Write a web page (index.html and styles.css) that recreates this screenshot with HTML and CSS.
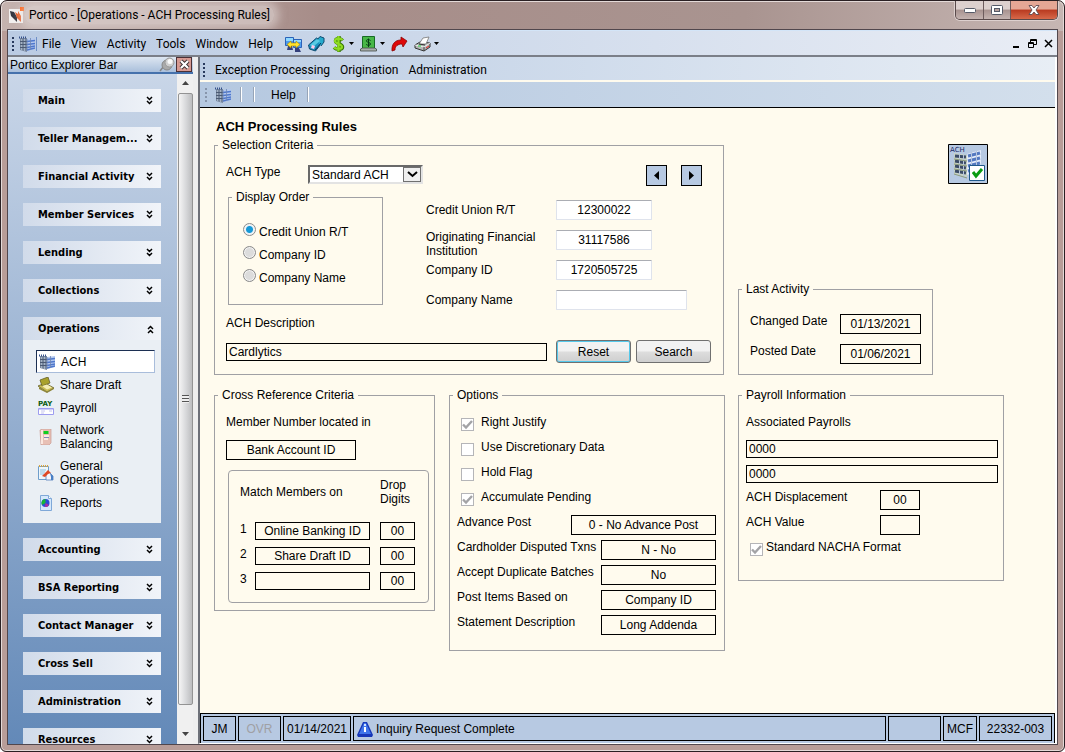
FILE: index.html
```html
<!DOCTYPE html>
<html lang="en">
<head>
<meta charset="utf-8">
<title>Portico - [Operations - ACH Processing Rules]</title>
<link rel="stylesheet" href="styles.css">
</head>
<body>
<svg class="defs" aria-hidden="true">
  <symbol id="building" viewBox="0 0 16 16">
    <path d="M1 2h7v14l-7-2z" fill="#76869c"/>
    <path d="M8 3l8-1v11l-8 2z" fill="#b4c8ee"/>
    <path d="M2.500 3v11M5.500 3v12" stroke="#a4b2c4"/>
    <path d="M1 5.500h7M1 8.500h7M1 11.500h7" stroke="#4b5a73"/>
    <path d="M8 5.500l8-1M8 8.500l8-1M8 11.500l8-1.500M8 14l8-2" stroke="#4f78cc" stroke-width="1.300"/>
    <path d="M11.500 2v12M8 3v12" stroke="#6e86b4" stroke-width=".8"/>
    <path d="M0 1.500h7" stroke="#34508c" stroke-width="2" stroke-dasharray="1 1"/>
  </symbol>
  <symbol id="down" viewBox="0 0 8 10">
    <path d="M1 1l2.500 2.500L6 1M1 5l2.500 2.500L6 5" fill="none" stroke="#000" stroke-width="1.500"/>
  </symbol>
  <symbol id="caret" viewBox="0 0 5 3"><path d="M0 0h5L2.500 3z"/></symbol>
</svg>

<div class="window">
  <header class="titlebar">
    <svg class="app-icon" viewBox="0 0 16 16"><path d="M0 2h14v14H0z" fill="#f2f0ef"/><path d="M1 4l4 1 3 5v5l-4-4-2-2z" fill="#34353f"/><path d="M6 5l3 2V4l3 5v6l-4-4z" fill="#e85a22"/><path d="M11 0h4v4h-4z" fill="#ff5a0a"/></svg>
    <h1 class="window-title">Portico - [Operations - ACH Processing Rules]</h1>
    <div class="window-controls">
      <button class="wc" aria-label="Minimize"><svg width="14" height="8" viewBox="0 0 14 8"><rect x="1.500" y="2.500" width="11" height="4" rx="1" fill="#fff" stroke="#555a68"/></svg></button>
      <button class="wc wc-max" aria-label="Maximize"><svg width="12" height="10" viewBox="0 0 12 10"><rect x=".5" y=".5" width="11" height="9" rx="1" fill="#fff" stroke="#555a68"/><rect x="3.500" y="3.500" width="5" height="3" fill="#b8a29e" stroke="#555a68"/></svg></button>
      <button class="wc wc-close" aria-label="Close"><svg width="12" height="10" viewBox="0 0 12 10"><path d="M1 .5h3l2 2.500 2-2.500h3L8 5l3 4.500H8L6 7 4 9.500H1L4 5z" fill="#fff" stroke="#5d4a50" stroke-width=".9"/></svg></button>
    </div>
  </header>

  <div class="client">
    <nav class="menubar">
      <span class="grip"></span>
      <svg class="icon16"><use href="#building"/></svg>
      <span class="thin-sep"></span>
      <button class="menu">File</button><button class="menu">View</button><button class="menu">Activity</button><button class="menu">Tools</button><button class="menu">Window</button><button class="menu">Help</button>
      <div class="tools">
        <button class="tool" aria-label="Network"><svg width="17" height="16" viewBox="0 0 17 16"><path d="M.5 1.500h8v8h-8zM8.500 3.500h8v8h-8z" fill="#4d9bf0" stroke="#2b63b8"/><path d="M1 2h7v3H1zM9 4h7v2H9z" fill="#8fd8ff"/><path d="M3 10h4l1 4H2zM10 12h4l2 4h-6z" fill="#34407c"/><path d="M2 8.500L6 5v2h5V5l4 3.500-4 3.500v-2H6v2z" fill="#ffe32e" stroke="#a98300" stroke-width=".6"/></svg></button>
        <button class="tool" aria-label="Tag"><svg width="17" height="16" viewBox="0 0 17 16"><path d="M.5 9l8-7 6 4-7 9-6-2z" fill="#1a92be" stroke="#104b70"/><path d="M9 4l3-3.500 4 1.500v4l-3 4" fill="#26aacd" stroke="#104b70"/><path d="M2 9l7-6 3 2-7 6z" fill="#58cae2"/><path d="M4 9l3 1-1 3-3-1z" fill="#ffc9e8"/><path d="M7 14l6-7" stroke="#083c62"/></svg></button>
        <button class="tool" aria-label="Currency"><svg width="15" height="16" viewBox="0 0 15 16"><path d="M11.500 4.500C10 2 4.500 2 4.500 5c0 3 7 2.500 7 6 0 3-6 3-8.500.5M8 0v16" fill="none" stroke="#397a05" stroke-width="3.500"/><path d="M11.500 4.200C10 2 4 2 4 5c0 3 7 2.500 7 6 0 2.500-6 2.500-8 .5M7.500 0v15.500" fill="none" stroke="#8fdc22" stroke-width="2.200"/></svg><svg class="caret"><use href="#caret"/></svg></button>
        <button class="tool" aria-label="Cash"><svg width="17" height="16" viewBox="0 0 17 16"><path d="M2.500.5h12v12h-12z" fill="#48b747" stroke="#176b24"/><path d="M.5 13l2-1h12l2 1v2H.5z" fill="#a7adab" stroke="#444c48" stroke-width=".8"/><path d="M10.500 4.500c-2-1.500-4.500-1-4 .7.500 1.600 4 1 4 2.800 0 1.700-3 1.700-4.300.4M8.500 2.500v8.500" fill="none" stroke="#073e16"/></svg><svg class="caret"><use href="#caret"/></svg></button>
        <button class="tool" aria-label="Forward"><svg width="17" height="16" viewBox="0 0 17 16"><path d="M1 15C.5 8 4 4 10 4V1l6 4-4 6-1-3C7 8 4 10 4 14z" fill="#de0808" stroke="#8e0202" stroke-width=".8"/></svg></button>
        <button class="tool" aria-label="Print"><svg width="17" height="16" viewBox="0 0 17 16"><path d="M1 9l5-3 10 1v4l-6 4-9-3z" fill="#b4b6b5" stroke="#333"/><path d="M5 8l4-6 6-1-3 7z" fill="#fff" stroke="#777" stroke-width=".8"/><path d="M1 9l9 2 6-4" fill="none" stroke="#eee"/><path d="M10 11v4" stroke="#444"/><path d="M5 8l6 1" stroke="#333"/><path d="M4 10h3" stroke="#22d63d"/><path d="M12 12l3-2" stroke="#e22"/></svg><svg class="caret"><use href="#caret"/></svg></button>
      </div>
      <div class="mdi-controls">
        <button aria-label="Minimize document"><svg width="9" height="9"><path d="M1 7h6v2H1z"/></svg></button>
        <button aria-label="Restore document"><svg width="9" height="9"><path d="M2.500 3V.5h6v5H6M2 1.500h6M.5 3.500h5v5h-5zM0 4.500h6" fill="none" stroke="#000"/></svg></button>
        <button aria-label="Close document"><svg width="9" height="9"><path d="M1 1l7 7M8 1L1 8" stroke="#000" stroke-width="1.500"/></svg></button>
      </div>
    </nav>

    <div class="workspace">
      <aside class="explorer">
        <div class="explorer-title"><h2>Portico Explorer Bar</h2>
          <svg width="16" height="15" viewBox="0 0 16 15"><path d="M5 9l-4 5" stroke="#858585" stroke-width="1.500"/><ellipse cx="8" cy="8" rx="5" ry="5" fill="#aaa" stroke="#888"/><circle cx="10.500" cy="5.500" r="4.500" fill="#cfcfcf" stroke="#999"/><circle cx="11" cy="4.500" r="2.500" fill="#fafafa"/></svg>
          <button class="explorer-close" aria-label="Close explorer"><svg width="11" height="11" viewBox="0 0 11 11"><path d="M2 2l7 7M9 2L2 9" stroke="#3a3032" stroke-width="4"/><path d="M2 2l7 7M9 2L2 9" stroke="#fff" stroke-width="2.200"/></svg></button>
        </div>
        <div class="explorer-body">
          <div class="groups">
            <section><button class="group">Main<svg><use href="#down"/></svg></button></section>
            <section><button class="group">Teller Managem...<svg><use href="#down"/></svg></button></section>
            <section><button class="group">Financial Activity<svg><use href="#down"/></svg></button></section>
            <section><button class="group">Member Services<svg><use href="#down"/></svg></button></section>
            <section><button class="group">Lending<svg><use href="#down"/></svg></button></section>
            <section><button class="group">Collections<svg><use href="#down"/></svg></button></section>
            <section>
              <button class="group open" aria-expanded="true">Operations<svg><use href="#down"/></svg></button>
              <div class="items">
                <a href="#" class="item current"><svg class="icon16"><use href="#building"/></svg>ACH</a>
                <a href="#" class="item"><svg class="icon16" viewBox="0 0 16 16"><path d="M0 9l7-3 9 5-7 4z" fill="#c9bd54" stroke="#66602a" stroke-width=".8"/><path d="M1 10v2l8 4 7-4v-1l-7 4z" fill="#8d8435"/><path d="M2 3l8-3 2 6-8 3z" fill="#a9a12c" stroke="#66602a" stroke-width=".8"/><path d="M4 9l5-1.500 5 3-5 2z" fill="#f4edb4"/></svg>Share Draft</a>
                <a href="#" class="item"><svg class="icon16 spill" viewBox="0 0 16 16"><text class="pay" x="0" y="6">PAY</text><path d="M.5 8.500h15v6H.5z" fill="#fff" stroke="#9d9cf0"/><path d="M1 9h14" stroke="#9d9cf0"/><path d="M3 11h4M3 13h3M11 11h3" stroke="#c4c4ee"/></svg>Payroll</a>
                <a href="#" class="item two"><svg class="icon16" viewBox="0 0 16 16"><path d="M2 1l3-1h8v14l-2 2H3z" fill="#e8c0b5" stroke="#c99b92" stroke-width=".7"/><path d="M3 1h2v14H3z" fill="#fbe7df"/><path d="M5.500 2h5v3h-5z" fill="#10cf20"/><path d="M6 7h5M6 10h4" stroke="#fff7f2" stroke-width="1.500"/><path d="M6 8.500h5" stroke="#8187ba"/></svg><span>Network<br>Balancing</span></a>
                <a href="#" class="item two"><svg class="icon16" viewBox="0 0 16 16"><path d="M.5 1.500h10v13H.5z" fill="#eef6fb" stroke="#6f9ecb"/><path d="M1 1h10" stroke="#d6a543" stroke-width="2" stroke-dasharray="1 1"/><path d="M2 5h6M2 7h5M2 9h4" stroke="#8fc0dd"/><path d="M8 10l3-3 4 4v4H8z" fill="#f5f5fb" stroke="#547dbd" stroke-width=".8"/><path d="M4 11l6-6 3 3-3 1-3 3z" fill="#df4925"/><path d="M12 8l3 3v4h-2v-3z" fill="#477fc6"/></svg><span>General<br>Operations</span></a>
                <a href="#" class="item"><svg class="icon16" viewBox="0 0 16 16"><path d="M2.500.5h8l3 3v12h-11z" fill="#d5e8fb" stroke="#7fa8d8"/><path d="M10.500.5v3h3" fill="#fff" stroke="#7fa8d8"/><circle cx="7.500" cy="8" r="4" fill="#2a4bd6"/><path d="M7.500 8V4a4 4 0 0 0-3.500 6z" fill="#17b835"/><path d="M7.500 8l3.500 2a4 4 0 0 1-4 2z" fill="#b12d9c"/></svg>Reports</a>
              </div>
            </section>
            <section><button class="group">Accounting<svg><use href="#down"/></svg></button></section>
            <section><button class="group">BSA Reporting<svg><use href="#down"/></svg></button></section>
            <section><button class="group">Contact Manager<svg><use href="#down"/></svg></button></section>
            <section><button class="group">Cross Sell<svg><use href="#down"/></svg></button></section>
            <section><button class="group">Administration<svg><use href="#down"/></svg></button></section>
            <section><button class="group">Resources<svg><use href="#down"/></svg></button></section>
          </div>
          <div class="scrollbar">
            <svg class="arrow" viewBox="0 0 7 4"><path d="M0 4h7L3.500 0z"/></svg>
            <div class="thumb"><span></span></div>
            <svg class="arrow" viewBox="0 0 7 4"><path d="M0 0h7L3.500 4z"/></svg>
          </div>
        </div>
      </aside>

      <main class="document">
        <nav class="doc-menu"><span class="grip"></span><button class="menu">Exception Processing</button><button class="menu">Origination</button><button class="menu">Administration</button></nav>
        <div class="doc-tools"><span class="grip pale"></span><svg class="icon16"><use href="#building"/></svg><span class="sep"></span><span class="sep"></span><button class="help">Help</button><span class="sep"></span></div>

        <form class="page">
          <h2 class="page-title">ACH Processing Rules</h2>
          <div class="board">
            <fieldset class="selection">
              <legend>Selection Criteria</legend>
              <div class="selection-body">
                <div class="type-row">
                  <label for="type">ACH Type</label>
                  <div class="select-wrap"><select id="type"><option>Standard ACH</option></select><span class="select-arrow"><svg width="11" height="7"><path d="M1 1l4.500 4L10 1" fill="none" stroke="#000" stroke-width="2"/></svg></span></div>
                  <button type="button" class="step first" aria-label="Previous"><svg width="5" height="9"><path d="M5 0v9L0 4.500z"/></svg></button>
                  <button type="button" class="step" aria-label="Next"><svg width="5" height="9"><path d="M0 0v9l5-4.500z"/></svg></button>
                </div>
                <div class="order-row">
                  <fieldset class="order">
                    <legend>Display Order</legend>
                    <div class="radios">
                      <label><input type="radio" name="order" checked><span>Credit Union R/T</span></label>
                      <label><input type="radio" name="order"><span>Company ID</span></label>
                      <label><input type="radio" name="order"><span>Company Name</span></label>
                    </div>
                  </fieldset>
                  <div class="lookup">
                    <label for="rt">Credit Union R/T</label><input id="rt" class="entry" value="12300022">
                    <label for="ofi" class="two-line">Originating Financial Institution</label><input id="ofi" class="entry" value="31117586">
                    <label for="cid">Company ID</label><input id="cid" class="entry" value="1720505725">
                    <label for="cname">Company Name</label><input id="cname" class="entry long" value="">
                  </div>
                </div>
                <label for="desc" class="desc-label">ACH Description</label>
                <div class="desc-row">
                  <input id="desc" class="field left slim" value="Cardlytics">
                  <button type="button" class="btn default">Reset</button>
                  <button type="button" class="btn">Search</button>
                </div>
              </div>
            </fieldset>

            <div class="side-top">
              <svg class="ach-badge" viewBox="0 0 40 40">
                <path d="M.5.500h39v39H.5z" fill="#b7c9e2" stroke="#000"/>
                <path d="M6 9l13 2v22L6 30z" fill="#c9d3c4"/><path d="M19 10l14-4v20l-14 5z" fill="#e3ebfa"/>
                <path d="M7 12l11 1M7 17l11 2M7 22l11 2M7 27l11 2" stroke="#3c4c68" stroke-width="3"/>
                <path d="M20 12l12-3M20 17l12-3M20 22l12-3M20 27l12-3" stroke="#5479c1" stroke-width="3"/>
                <path d="M11.500 10v21M15.500 11v22M23.500 8v23M28.500 7v22" stroke="#b7c6dd"/>
                <path d="M6 15l13 2M6 20l13 2M6 25l13 2M6 30l13 4" stroke="#8c9b7c" fill="none"/>
                <text class="ach" x="2" y="8">ACH</text>
                <path d="M21.500 21.500h15v15h-15z" fill="#fff" stroke="#20598c"/><path d="M25 28l3 4 6-7" fill="none" stroke="#0a9c13" stroke-width="3"/>
              </svg>
              <fieldset class="activity">
                <legend>Last Activity</legend>
                <div class="activity-body">
                  <label for="changed">Changed Date</label><input id="changed" class="field" readonly value="01/13/2021">
                  <label for="posted">Posted Date</label><input id="posted" class="field" readonly value="01/06/2021">
                </div>
              </fieldset>
            </div>

            <div class="lower">
              <fieldset class="cross">
                <legend>Cross Reference Criteria</legend>
                <div class="cross-body">
                  <label for="located">Member Number located in</label>
                  <input id="located" class="field located" readonly value="Bank Account ID">
                  <div class="match">
                    <table>
                      <colgroup><col class="c-num"><col><col class="c-drop"></colgroup>
                      <thead><tr><th colspan="2" scope="col">Match Members on</th><th scope="col">Drop Digits</th></tr></thead>
                      <tbody>
                        <tr><td>1</td><td><input class="field slim" aria-label="Match 1" readonly value="Online Banking ID"></td><td><input class="field slim" aria-label="Drop digits 1" readonly value="00"></td></tr>
                        <tr><td>2</td><td><input class="field slim" aria-label="Match 2" readonly value="Share Draft ID"></td><td><input class="field slim" aria-label="Drop digits 2" readonly value="00"></td></tr>
                        <tr><td>3</td><td><input class="field slim" aria-label="Match 3" readonly value=""></td><td><input class="field slim" aria-label="Drop digits 3" readonly value="00"></td></tr>
                      </tbody>
                    </table>
                  </div>
                </div>
              </fieldset>

              <fieldset class="options">
                <legend>Options</legend>
                <div class="rows">
                  <label class="check"><input type="checkbox" checked disabled><span>Right Justify</span></label>
                  <label class="check"><input type="checkbox" disabled><span>Use Discretionary Data</span></label>
                  <label class="check"><input type="checkbox" disabled><span>Hold Flag</span></label>
                  <label class="check"><input type="checkbox" checked disabled><span>Accumulate Pending</span></label>
                  <div class="row"><label for="adv">Advance Post</label><input id="adv" class="field w145" readonly value="0 - No Advance Post"></div>
                  <div class="row"><label for="disp">Cardholder Disputed Txns</label><input id="disp" class="field w115" readonly value="N - No"></div>
                  <div class="row"><label for="dup">Accept Duplicate Batches</label><input id="dup" class="field w115" readonly value="No"></div>
                  <div class="row"><label for="based">Post Items Based on</label><input id="based" class="field w115" readonly value="Company ID"></div>
                  <div class="row"><label for="stmt">Statement Description</label><input id="stmt" class="field w115" readonly value="Long Addenda"></div>
                </div>
              </fieldset>
            </div>

            <fieldset class="payroll">
              <legend>Payroll Information</legend>
              <div class="rows">
                <div class="row"><label for="pay1">Associated Payrolls</label></div>
                <div class="row"><input id="pay1" class="field left slim full" readonly value="0000"></div>
                <div class="row"><input class="field left slim full" aria-label="Associated payroll 2" readonly value="0000"></div>
                <div class="row narrow"><label for="dis">ACH Displacement</label><input id="dis" class="field w40" readonly value="00"></div>
                <div class="row narrow"><label for="val">ACH Value</label><input id="val" class="field w40" readonly value=""></div>
                <label class="check near"><input type="checkbox" checked disabled><span>Standard NACHA Format</span></label>
              </div>
            </fieldset>
          </div>
        </form>

        <footer class="status">
          <span class="cell s-user">JM</span><span class="cell s-ovr">OVR</span><span class="cell s-date">01/14/2021</span>
          <span class="cell s-msg"><svg width="16" height="16" viewBox="0 0 16 16"><path d="M6 1h4l6 13-1 2H1l-1-2z" fill="#1737b8"/><path d="M7 2h2l5 11H2z" fill="#3f74ea"/><path d="M8 6v5" stroke="#fff" stroke-width="2"/><path d="M7 3h2v2H7z" fill="#cfe4ff"/></svg>Inquiry Request Complete</span>
          <span class="cell s-blank"></span><span class="cell s-mcf">MCF</span><span class="cell s-id">22332-003</span>
        </footer>
      </main>
    </div>
  </div>
</div>
</body>
</html>
```
FILE: styles.css
```css
* { box-sizing: border-box; }
body {
  margin: 0;
  font: 12px/14px "Liberation Sans", Arial, sans-serif;
  color: #000;
}
button, input, select { font: inherit; color: inherit; }
button { padding: 0; border: 0; background: none; }
h1, h2 { margin: 0; font: inherit; }
.defs { position: absolute; width: 0; height: 0; }
.icon16 { width: 16px; height: 16px; flex: none; }
.spill { overflow: visible; }

/* window frame */
.window {
  height: 100vh;
  display: flex;
  flex-direction: column;
  padding: 0 6px 6px;
  border: 1px solid #2a2023;
  border-radius: 7px 7px 6px 6px;
  background: linear-gradient(90deg, #c5b3af, #a78d89 30%, #a99490 70%, #c6b6b3) top / 100% 30px no-repeat, #b89d98;
  box-shadow: inset 0 0 0 1px #e4dad8;
  overflow: hidden;
}
.titlebar { height: 28px; flex: none; display: flex; align-items: center; padding-left: 2px; }
.app-icon { width: 16px; height: 16px; flex: none; }
.window-title {
  padding: 0 4px;
  font: 12px/18px Roboto, "Open Sans", sans-serif;
  background: rgba(230, 220, 218, .55);
  box-shadow: 0 0 8px 5px rgba(230, 220, 218, .55);
  border-radius: 8px;
}
.window-controls {
  align-self: flex-start;
  display: flex;
  height: 19px;
  margin-left: auto;
  border: 1px solid #594a4b;
  border-top: 0;
  border-radius: 0 0 5px 5px;
  box-shadow: 0 0 0 1px #ddd0ce;
  overflow: hidden;
}
.wc {
  width: 28px;
  display: grid;
  place-items: center;
  border-right: 1px solid #6d5c5d;
  background: linear-gradient(#ddd0ce 45%, #a89390 50%, #c4b3b0);
}
.wc-max { width: 27px; }
.wc-close { width: 46px; border: 0; background: linear-gradient(#e5a795 45%, #b93a20 50%, #d7694a); }
.client {
  flex: 1;
  min-height: 0;
  display: flex;
  flex-direction: column;
  border: 1px solid #51474d;
  background: #eee;
}

/* menus */
.menubar, .doc-menu, .doc-tools { display: flex; align-items: center; flex: none; }
.menubar {
  height: 27px;
  padding: 1px 4px 0 4px;
  background: linear-gradient(90deg, #bacbe3, #e9edf5);
  border-top: 1px solid #d3e5f8;
  border-bottom: 2px solid #7b7f88;
}
.menu { font: 12px/16px Roboto, "Open Sans", sans-serif; }
.menubar .menu { margin-right: 10px; }
.grip {
  width: 2px;
  height: 14px;
  flex: none;
  background: repeating-linear-gradient(#27395d 0 2px, transparent 2px 4px);
}
.grip.pale { background: repeating-linear-gradient(#8795ab 0 2px, transparent 2px 4px); }
.menubar .icon16 { margin-left: 5px; }
.thin-sep { width: 1px; height: 14px; margin: 0 5px 0 1px; background: #6f8fc6; }
.tools { display: flex; gap: 6px; margin-left: 2px; }
.tool { display: flex; align-items: center; gap: 3px; }
.tool .caret { width: 5px; height: 3px; }
.mdi-controls { display: flex; gap: 7px; margin-left: auto; }
.mdi-controls button { height: 9px; line-height: 0; }
.workspace { flex: 1; min-height: 0; display: flex; }

/* explorer */
.explorer { width: 185px; flex: none; display: flex; flex-direction: column; }
.explorer-title {
  height: 17px;
  flex: none;
  display: flex;
  align-items: center;
  padding-left: 2px;
  border-bottom: 2px solid #4571ac;
  background: linear-gradient(#dde6f1, #a9bfdb);
}
.explorer-title h2 { flex: 1; }
.explorer-close { width: 16px; height: 15px; margin: 0 1px; display: grid; place-items: center; border: 1px solid #4b3035; background: #d79a92; }
.explorer-body { flex: 1; min-height: 0; display: flex; overflow: hidden; }
.groups {
  flex: 1;
  display: flex;
  flex-direction: column;
  gap: 15px;
  padding: 15px 16px 0 15px;
  background: linear-gradient(#c9d6e8, #6389b8);
}
.group {
  width: 100%;
  height: 23px;
  display: flex;
  align-items: center;
  justify-content: space-between;
  padding: 0 7px 0 15px;
  font: bold 11px/14px "DejaVu Sans Condensed", "DejaVu Sans", sans-serif;
  background: linear-gradient(90deg, #d1dbea, #f1f4f9);
}
.group svg { width: 8px; height: 10px; }
.group.open svg { transform: rotate(180deg); }
.items { display: flex; flex-direction: column; padding: 10px 6px 9px 13px; background: #eaeff4; }
.item {
  min-height: 23px;
  display: flex;
  align-items: center;
  gap: 6px;
  padding: 0 2px;
  color: #000;
  text-decoration: none;
}
.item.two { min-height: 36px; }
.item.current { background: #fff; border: 1px solid; border-color: #1c2f52 #a9bddb #a9bddb #1c2f52; }
.pay { font: bold 7px "DejaVu Sans", sans-serif; fill: #0a5c12; }
.ach { font: 7px "DejaVu Sans", sans-serif; fill: #1a2a66; }
.scrollbar { width: 16px; display: flex; flex-direction: column; align-items: center; background: #f0f0f0; }
.arrow { width: 7px; height: 4px; margin: 7px 0 8px; fill: #444; flex: none; }
.thumb {
  width: 15px;
  flex: 1;
  display: grid;
  place-items: center;
  margin-bottom: 20px;
  border: 1px solid #939393;
  border-radius: 2px;
  background: linear-gradient(90deg, #f5f5f5, #d9dadc 50%, #bcbdbf);
}
.thumb span { width: 7px; height: 8px; background: repeating-linear-gradient(#555 0 1px, #eee 1px 3px); }

/* document */
.document {
  flex: 1;
  min-width: 0;
  display: flex;
  flex-direction: column;
  margin-left: 5px;
  border-left: 2px solid #6d7078;
  border-right: 2px solid #fff;
  border-bottom: 1px solid #fff;
  background: #fffbee;
}
.doc-menu { height: 25px; padding: 2px 0 0 3px; gap: 10px; background: linear-gradient(90deg, #bccde4, #e8eef5); border-bottom: 2px solid #fffbee; }
.doc-tools { height: 26px; padding-left: 5px; background: linear-gradient(90deg, #b5c8e0, #d3dfec); border-bottom: 1px solid #000; }
.doc-tools .icon16 { margin: 0 9px 0 8px; }
.sep { width: 2px; height: 15px; margin-right: 11px; background: linear-gradient(90deg, #97a5b8 50%, #fff 50%); }
.help { margin: 0 11px 0 5px; }

.page { flex: 1; min-height: 0; padding: 12px 51px 0 14px; }
.page-title { padding-left: 2px; font-weight: bold; font-size: 13px; line-height: 14px; }
.board { display: grid; grid-template-columns: 511fr 266fr; column-gap: 13px; row-gap: 13px; margin-top: 4px; align-items: start; }
fieldset { min-width: 0; margin: 0; padding: 0 3px; border: 1px solid #a0a0a4; }
legend { padding: 0 4px; height: 14px; }
.selection { margin-right: 1px; }
.selection-body { padding: 13px 8px 11px; }
.type-row { display: flex; height: 21px; padding-right: 10px; }
.type-row label { width: 82px; }
.select-wrap { position: relative; width: 115px; height: 19px; }
select {
  width: 100%;
  height: 100%;
  padding: 0 0 0 2px;
  appearance: none;
  border: 2px solid;
  border-color: #696969 #e3e3e3 #e3e3e3 #696969;
  border-radius: 0;
  background: #fff;
}
.select-arrow {
  position: absolute;
  top: 2px;
  right: 2px;
  width: 18px;
  bottom: 2px;
  display: grid;
  place-items: center;
  border: 1px solid #707070;
  background: #efefef;
  pointer-events: none;
}
.step { width: 21px; height: 21px; display: grid; place-items: center; border: 1px solid #000; background: #b7c9e2; margin-left: 14px; }
.step.first { margin-left: auto; }
.order-row { display: flex; align-items: flex-start; margin-top: 4px; padding-left: 2px; }
.order { width: 155px; height: 115px; }
.radios { padding: 16px 0 0 11px; display: grid; grid-auto-rows: 23px; }
.radios label { display: flex; align-items: center; gap: 3px; }
.radios input { appearance: none; width: 13px; height: 13px; margin: 0 0 4px; border: 1px solid #8a8a8a; border-radius: 50%; background: #dcdcdc; box-shadow: inset 0 0 0 1px #f4f4f4; }
.radios input:checked { background: radial-gradient(#1699d6 0 3px, #e8f2f8 4px); }
.lookup { display: grid; grid-template-columns: 130px 131px; grid-auto-rows: 30px; align-items: center; margin: 5px 0 0 43px; }
.two-line { padding-top: 8px; }
.entry { width: 96px; height: 20px; padding: 0; text-align: center; border: 1px solid #dfe3ec; border-top-color: #abadb3; border-radius: 1px; background: #fff; }
.entry.long { width: 131px; }
.desc-label { display: block; margin-top: 1px; }
.desc-row { display: flex; align-items: center; margin-top: 10px; }
.desc-row .field { flex: 1; min-width: 0; margin-right: 9px; }
.btn { width: 75px; height: 23px; border: 1px solid #707070; border-radius: 3px; background: linear-gradient(#f2f2f2 45%, #dcdcdc 55%, #cfcfcf); }
.btn + .btn { margin: 0 1px 0 5px; }
.btn.default { box-shadow: inset 0 0 0 1px #55c8ea; }

.field { height: 20px; padding: 0 2px; border: 1px solid #000; border-radius: 0; background: transparent; text-align: center; outline: 0; }
.field.slim { height: 18px; }
.field.left { text-align: left; }

.side-top { align-self: stretch; display: flex; flex-direction: column; justify-content: space-between; padding-top: 6px; }
.ach-badge { width: 40px; height: 40px; align-self: flex-end; margin-right: 16px; }
.activity { width: 195px; }
.activity-body { display: grid; grid-template-columns: 90px 81px; grid-auto-rows: 20px; row-gap: 10px; padding: 18px 8px 10px; }

.lower { display: grid; grid-template-columns: 221fr 276fr; column-gap: 14px; align-items: start; }
.cross-body { padding: 13px 2px 7px 8px; }
.cross-body label { display: block; }
.located { display: block; width: 130px; margin: 11px 0 10px; }
.match { margin-left: 2px; padding: 5px 13px 10px 11px; border: 1px solid #a0a0a4; border-radius: 4px; }
table { width: 100%; border-collapse: collapse; table-layout: fixed; }
.c-num { width: 15px; }
.c-drop { width: 35px; }
th { height: 41px; padding: 0 0 10px; text-align: left; font-weight: normal; }
td { height: 25px; padding: 5px 0 2px; vertical-align: top; }
td .field { display: block; width: 100%; }
td:nth-child(2) { padding-right: 10px; }

.rows { padding: 8px 5px 15px 4px; }
.payroll .rows { padding: 8px 2px 20px 4px; }
.row { height: 25px; display: flex; justify-content: space-between; align-items: flex-start; padding-top: 5px; }
.w145 { width: 145px; }
.w115 { width: 115px; }
.w40 { width: 40px; }
.full { width: 100%; }
.row.narrow { padding-right: 78px; }
.check { height: 25px; display: flex; gap: 7px; padding: 5px 0 0 4px; }
.check.near { gap: 3px; }
.check input { appearance: none; width: 13px; height: 13px; margin: 3px 0 0; border: 1px solid #b5b5b8; background: #fff; }
.check input:checked { background: url("data:image/svg+xml,%3Csvg xmlns='http://www.w3.org/2000/svg' viewBox='0 0 11 11'%3E%3Cpath d='M1 5.500L4 8.500L10 2' fill='none' stroke='%23a3a3a6' stroke-width='2.400'/%3E%3C/svg%3E") #fff; }

.status { height: 30px; flex: none; display: flex; gap: 2px; padding: 2px 2px 1px; border: 1px solid #000; border-bottom: 0; background: #b7c9e2; }
.cell { height: 25px; display: flex; align-items: center; justify-content: center; border: 1px solid #000; white-space: nowrap; }
.s-user { width: 33px; }
.s-ovr { width: 43px; color: #a0a0a4; }
.s-date { width: 68px; }
.s-msg { flex: 1; justify-content: flex-start; gap: 3px; padding-left: 3px; }
.s-blank { width: 53px; }
.s-mcf { width: 34px; }
.s-id { width: 73px; }
```
